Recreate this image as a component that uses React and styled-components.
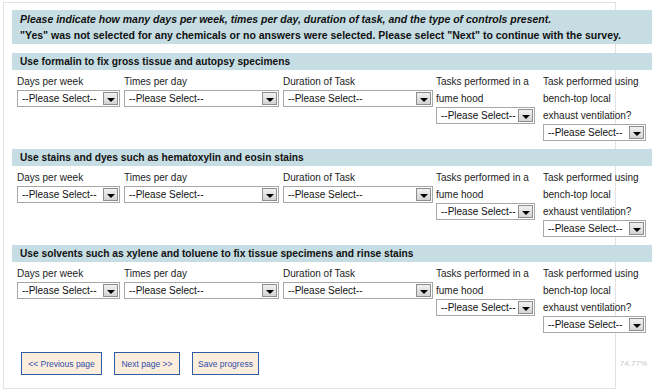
import React from 'react'
import styled, { createGlobalStyle } from 'styled-components'

const sections = [
  'Use formalin to fix gross tissue and autopsy specimens',
  'Use stains and dyes such as hematoxylin and eosin stains',
  'Use solvents such as xylene and toluene to fix tissue specimens and rinse stains'
]

const columns = [
  { label: ['Days per week'], width: 103 },
  { label: ['Times per day'], width: 155 },
  { label: ['Duration of Task'], width: 150 },
  { label: ['Tasks performed in a', 'fume hood'], width: 99 },
  { label: ['Task performed using', 'bench-top local', 'exhaust ventilation?'], width: 103 }
]

export default function App () {
  return (
    <>
      <GlobalStyle />
      <Frame>
        <Intro>
          <IntroLine $italic>
            Please indicate how many days per week, times per day, duration of task, and the type of controls present.
          </IntroLine>
          <IntroLine>
            "Yes" was not selected for any chemicals or no answers were selected. Please select "Next" to continue with the survey.
          </IntroLine>
        </Intro>

        {sections.map(title => (
          <Section key={title}>
            <SectionTitle>{title}</SectionTitle>
            <Fields>
              {columns.map(col => (
                <Field key={col.label[0]}>
                  {col.label.map(line => <Label key={line}>{line}</Label>)}
                  <Select $width={col.width}>
                    <SelectText>--Please Select--</SelectText>
                    <SelectButton><Arrow /></SelectButton>
                  </Select>
                </Field>
              ))}
            </Fields>
          </Section>
        ))}

        <Footer>
          <Buttons>
            <NavButton $width={81}>&lt;&lt; Previous page</NavButton>
            <NavButton $width={66}>Next page &gt;&gt;</NavButton>
            <NavButton $width={67}>Save progress</NavButton>
          </Buttons>
          <Progress>74.77%</Progress>
        </Footer>
      </Frame>
    </>
  )
}

const GlobalStyle = createGlobalStyle`
  body {
    margin: 0;
    background: #fff;
    font-family: "Liberation Sans", Arial, sans-serif;
  }
`

const Frame = styled.div`
  box-sizing: border-box;
  width: 613px;
  height: 387px;
  margin: 2px 0 0 3px;
  padding: 7px 0 0 8px;
  border: 1px solid #e2e2e2;
`

const Intro = styled.div`
  box-sizing: border-box;
  width: 640px;
  height: 34px;
  padding: 1px 0 0 8px;
  background: #c6dde3;
`

const IntroLine = styled.div`
  height: 16px;
  line-height: 16px;
  font-size: 10.5px;
  font-weight: bold;
  font-style: ${p => (p.$italic ? 'italic' : 'normal')};
  color: #111;
  white-space: nowrap;
`

const Section = styled.div`
  width: 640px;
  margin-top: 9px;

  & + & {
    margin-top: 8px;
  }
`

const SectionTitle = styled.div`
  box-sizing: border-box;
  height: 17px;
  line-height: 17px;
  padding-left: 8px;
  background: #c6dde3;
  font-size: 10.2px;
  font-weight: bold;
  color: #111;
  white-space: nowrap;
`

const Fields = styled.div`
  display: grid;
  grid-template-columns: 107px 159px 153px 107px 1fr;
  align-items: start;
  padding: 3px 0 0 5px;
`

const Field = styled.div`
  display: flex;
  flex-direction: column;
`

const Label = styled.div`
  height: 17px;
  line-height: 17px;
  font-size: 10px;
  color: #222;
  white-space: nowrap;
`

const Select = styled.div`
  box-sizing: border-box;
  display: flex;
  align-items: center;
  justify-content: space-between;
  width: ${p => p.$width}px;
  height: 17px;
  padding: 0 1px 0 4px;
  border: 1px solid #a7a7a7;
  background: #fff;
`

const SelectText = styled.span`
  font-size: 10px;
  color: #111;
  white-space: nowrap;
`

const SelectButton = styled.span`
  box-sizing: border-box;
  display: flex;
  align-items: flex-end;
  justify-content: center;
  width: 15px;
  height: 13px;
  padding-bottom: 2px;
  border: 1px solid #8e8e8e;
  background: linear-gradient(#f0f0f0, #d4d4d4);
`

const Arrow = styled.span`
  width: 0;
  height: 0;
  border-left: 4px solid transparent;
  border-right: 4px solid transparent;
  border-top: 4px solid #000;
`

const Footer = styled.div`
  display: flex;
  align-items: center;
  justify-content: space-between;
  width: 640px;
  margin-top: 19px;
  padding-left: 9px;
  box-sizing: border-box;
`

const Buttons = styled.div`
  display: flex;
  gap: 12px;
`

const NavButton = styled.button`
  width: ${p => p.$width}px;
  height: 23px;
  padding: 0;
  border: 1px solid #2d5ea5;
  background: #fdeddd;
  color: #2d4fa8;
  font-family: "Liberation Sans", Arial, sans-serif;
  font-size: 8.5px;
  white-space: nowrap;
  cursor: pointer;
`

const Progress = styled.span`
  padding-right: 5px;
  font-family: "Liberation Sans", Arial, sans-serif;
  font-size: 8px;
  color: #c9c9c9;
`
